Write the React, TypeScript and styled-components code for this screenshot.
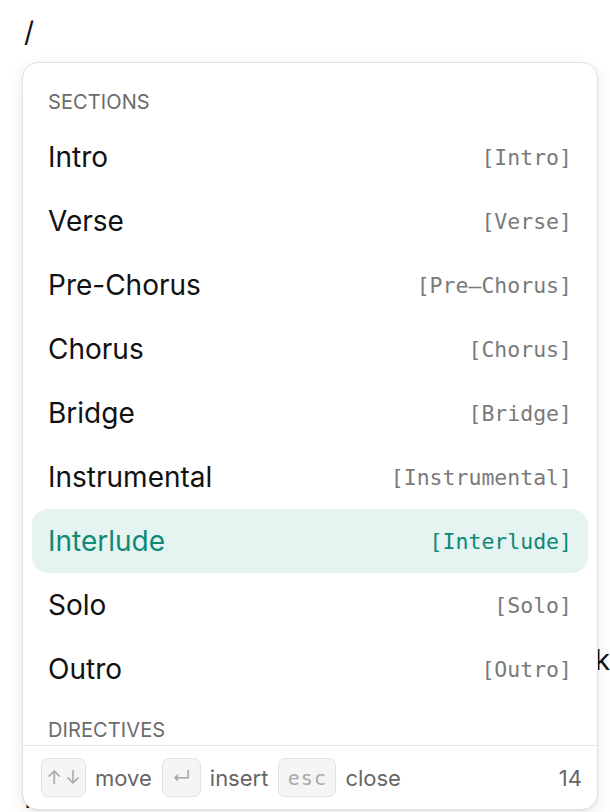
import React, { FC } from "react";
import styled, { createGlobalStyle } from "styled-components";

const GlobalStyle = createGlobalStyle`
  html, body {
    margin: 0;
    padding: 0;
    background: #ffffff;
  }
  body {
    font-family: Inter, "Noto Sans", sans-serif;
    color: #111111;
    -webkit-font-smoothing: antialiased;
  }
`;

const Page = styled.div`
  position: relative;
  width: 610px;
  height: 812px;
  overflow: hidden;
  background: #ffffff;
`;

const Editor = styled.div`
  padding: 12px 0 0 24px;
  font-size: 28px;
  line-height: 40px;
  color: #111111;
`;

const EditorLine = styled.div<{ $gap?: number; $align?: "left" | "right" }>`
  margin-top: ${({ $gap }) => $gap ?? 0}px;
  text-align: ${({ $align }) => $align ?? "left"};
  white-space: nowrap;
`;

const Popup = styled.div`
  position: absolute;
  top: 62px;
  left: 22px;
  width: 576px;
  height: 748px;
  box-sizing: border-box;
  display: flex;
  flex-direction: column;
  background: #ffffff;
  border: 1px solid #e2e2e2;
  border-radius: 16px;
  box-shadow: 0 6px 18px rgba(0, 0, 0, 0.08), 0 1px 3px rgba(0, 0, 0, 0.06);
  overflow: hidden;
`;

const List = styled.div`
  flex: 1;
  overflow: hidden;
  padding: 10px 9px 0 9px;
`;

const GroupLabel = styled.div`
  padding: 18px 16px 12px 16px;
  font-size: 20px;
  line-height: 22px;
  letter-spacing: 0.1px;
  color: #6b6b6b;
  text-transform: uppercase;
`;

const Row = styled.div<{ $active?: boolean }>`
  display: flex;
  align-items: center;
  justify-content: space-between;
  height: 64px;
  padding: 0 16px 0 16px;
  border-radius: 16px;
  background: ${({ $active }) => ($active ? "#e5f3f1" : "transparent")};
  color: ${({ $active }) => ($active ? "#0d8a76" : "#111111")};
`;

const Label = styled.span`
  font-size: 28px;
  line-height: 34px;
`;

const Token = styled.span<{ $active?: boolean }>`
  font-family: "DejaVu Sans Mono", "Liberation Mono", monospace;
  font-size: 21.5px;
  color: ${({ $active }) => ($active ? "#0d8a76" : "#7a7a7a")};
`;

const Footer = styled.div`
  display: flex;
  align-items: center;
  gap: 9px;
  height: 64px;
  flex-shrink: 0;
  box-sizing: border-box;
  padding: 0 15px 0 18px;
  border-top: 1px solid #e4e4e4;
  font-size: 22px;
  color: #666666;
`;

const Kbd = styled.span<{ $wide: number; $mono?: boolean }>`
  display: inline-flex;
  align-items: center;
  justify-content: center;
  gap: 3px;
  height: 39px;
  width: ${({ $wide }) => $wide}px;
  box-sizing: border-box;
  border: 1px solid #e2e2e2;
  border-radius: 7px;
  background: #f5f5f5;
  color: #a9a9a9;
  font-family: ${({ $mono }) =>
    $mono ? `"DejaVu Sans Mono", "Liberation Mono", monospace` : `Inter, "Noto Sans", sans-serif`};
  font-size: ${({ $mono }) => ($mono ? 20 : 19)}px;
  letter-spacing: ${({ $mono }) => ($mono ? 1 : 0)}px;
`;

const Hint = styled.span`
  margin-right: 1px;
`;

const Count = styled.span`
  margin-left: auto;
  color: #666666;
`;

interface Item {
  label: string;
  token: string;
}

const sections: Item[] = [
  { label: "Intro", token: "[Intro]" },
  { label: "Verse", token: "[Verse]" },
  { label: "Pre-Chorus", token: "[Pre\u2013Chorus]" },
  { label: "Chorus", token: "[Chorus]" },
  { label: "Bridge", token: "[Bridge]" },
  { label: "Instrumental", token: "[Instrumental]" },
  { label: "Interlude", token: "[Interlude]" },
  { label: "Solo", token: "[Solo]" },
  { label: "Outro", token: "[Outro]" },
];

const directives: Item[] = [
  { label: "Key", token: "{key}" },
  { label: "Tempo", token: "{tempo}" },
];

const ACTIVE = "Interlude";

const App: FC = () => {
  return (
    <Page>
      <GlobalStyle />
      <Editor>
        <EditorLine>/</EditorLine>
        <EditorLine $gap={588} $align="right">
          Falling through the dark
        </EditorLine>
        <EditorLine $gap={98}>Intro line</EditorLine>
      </Editor>
      <Popup>
        <List>
          <GroupLabel>Sections</GroupLabel>
          {sections.map((s) => (
            <Row key={s.label} $active={s.label === ACTIVE}>
              <Label>{s.label}</Label>
              <Token $active={s.label === ACTIVE}>{s.token}</Token>
            </Row>
          ))}
          <GroupLabel>Directives</GroupLabel>
          {directives.map((s) => (
            <Row key={s.label}>
              <Label>{s.label}</Label>
              <Token>{s.token}</Token>
            </Row>
          ))}
        </List>
        <Footer>
          <Kbd $wide={45}>
            <span>↑</span>
            <span>↓</span>
          </Kbd>
          <Hint>move</Hint>
          <Kbd $wide={39}>↵</Kbd>
          <Hint>insert</Hint>
          <Kbd $wide={58} $mono>
            esc
          </Kbd>
          <Hint>close</Hint>
          <Count>14</Count>
        </Footer>
      </Popup>
    </Page>
  );
};

export default App;
